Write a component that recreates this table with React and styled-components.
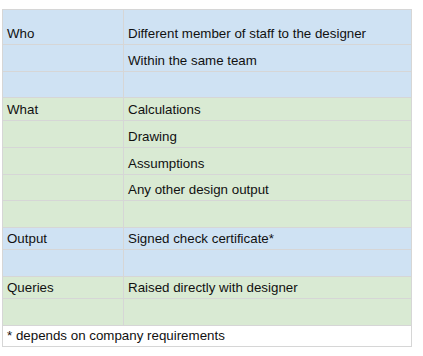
import React from 'react';
import styled, { createGlobalStyle } from 'styled-components';

const GlobalStyle = createGlobalStyle`
	body {
		margin: 0;
		background: #fff;
		font-family: 'Liberation Sans', Arial, sans-serif;
	}
`;

const Page = styled.div`
	padding: 9px 0 0 2px;
`;

const Sheet = styled.div`
	display: grid;
	grid-template-columns: 121px 288px;
	width: 409px;
	border-top: 1px solid #d6d6d6;
	border-left: 1px solid #d6d6d6;
`;

const Cell = styled.div`
	display: flex;
	align-items: flex-end;
	box-sizing: border-box;
	height: ${(p) => p.h}px;
	padding: 0 4px 2px;
	background: ${(p) => p.bg};
	border-right: 1px solid #d6d6d6;
	border-bottom: 1px solid #d6d6d6;
	font-size: 13.33px;
	line-height: 16px;
	color: #111;
	white-space: nowrap;
`;

const Note = styled(Cell)`
	grid-column: 1 / span 2;
	background: #fff;
`;

const BLUE = '#cfe2f3';
const GREEN = '#d9ead3';

const rows = [
	{ a: 'Who', b: 'Different member of staff to the designer', h: 35, bg: BLUE },
	{ a: '', b: 'Within the same team', h: 27, bg: BLUE },
	{ a: '', b: '', h: 26, bg: BLUE },
	{ a: 'What', b: 'Calculations', h: 23, bg: GREEN },
	{ a: '', b: 'Drawing', h: 27, bg: GREEN },
	{ a: '', b: 'Assumptions', h: 27, bg: GREEN },
	{ a: '', b: 'Any other design output', h: 26, bg: GREEN },
	{ a: '', b: '', h: 27, bg: GREEN },
	{ a: 'Output', b: 'Signed check certificate*', h: 22, bg: BLUE },
	{ a: '', b: '', h: 27, bg: BLUE },
	{ a: 'Queries', b: 'Raised directly with designer', h: 22, bg: GREEN },
	{ a: '', b: '', h: 27, bg: GREEN },
];

export default function App() {
	return (
		<Page>
			<GlobalStyle />
			<Sheet>
				{rows.map((r, i) => (
					<React.Fragment key={i}>
						<Cell h={r.h} bg={r.bg}>{r.a}</Cell>
						<Cell h={r.h} bg={r.bg}>{r.b}</Cell>
					</React.Fragment>
				))}
				<Note h={21}>* depends on company requirements</Note>
			</Sheet>
		</Page>
	);
}
